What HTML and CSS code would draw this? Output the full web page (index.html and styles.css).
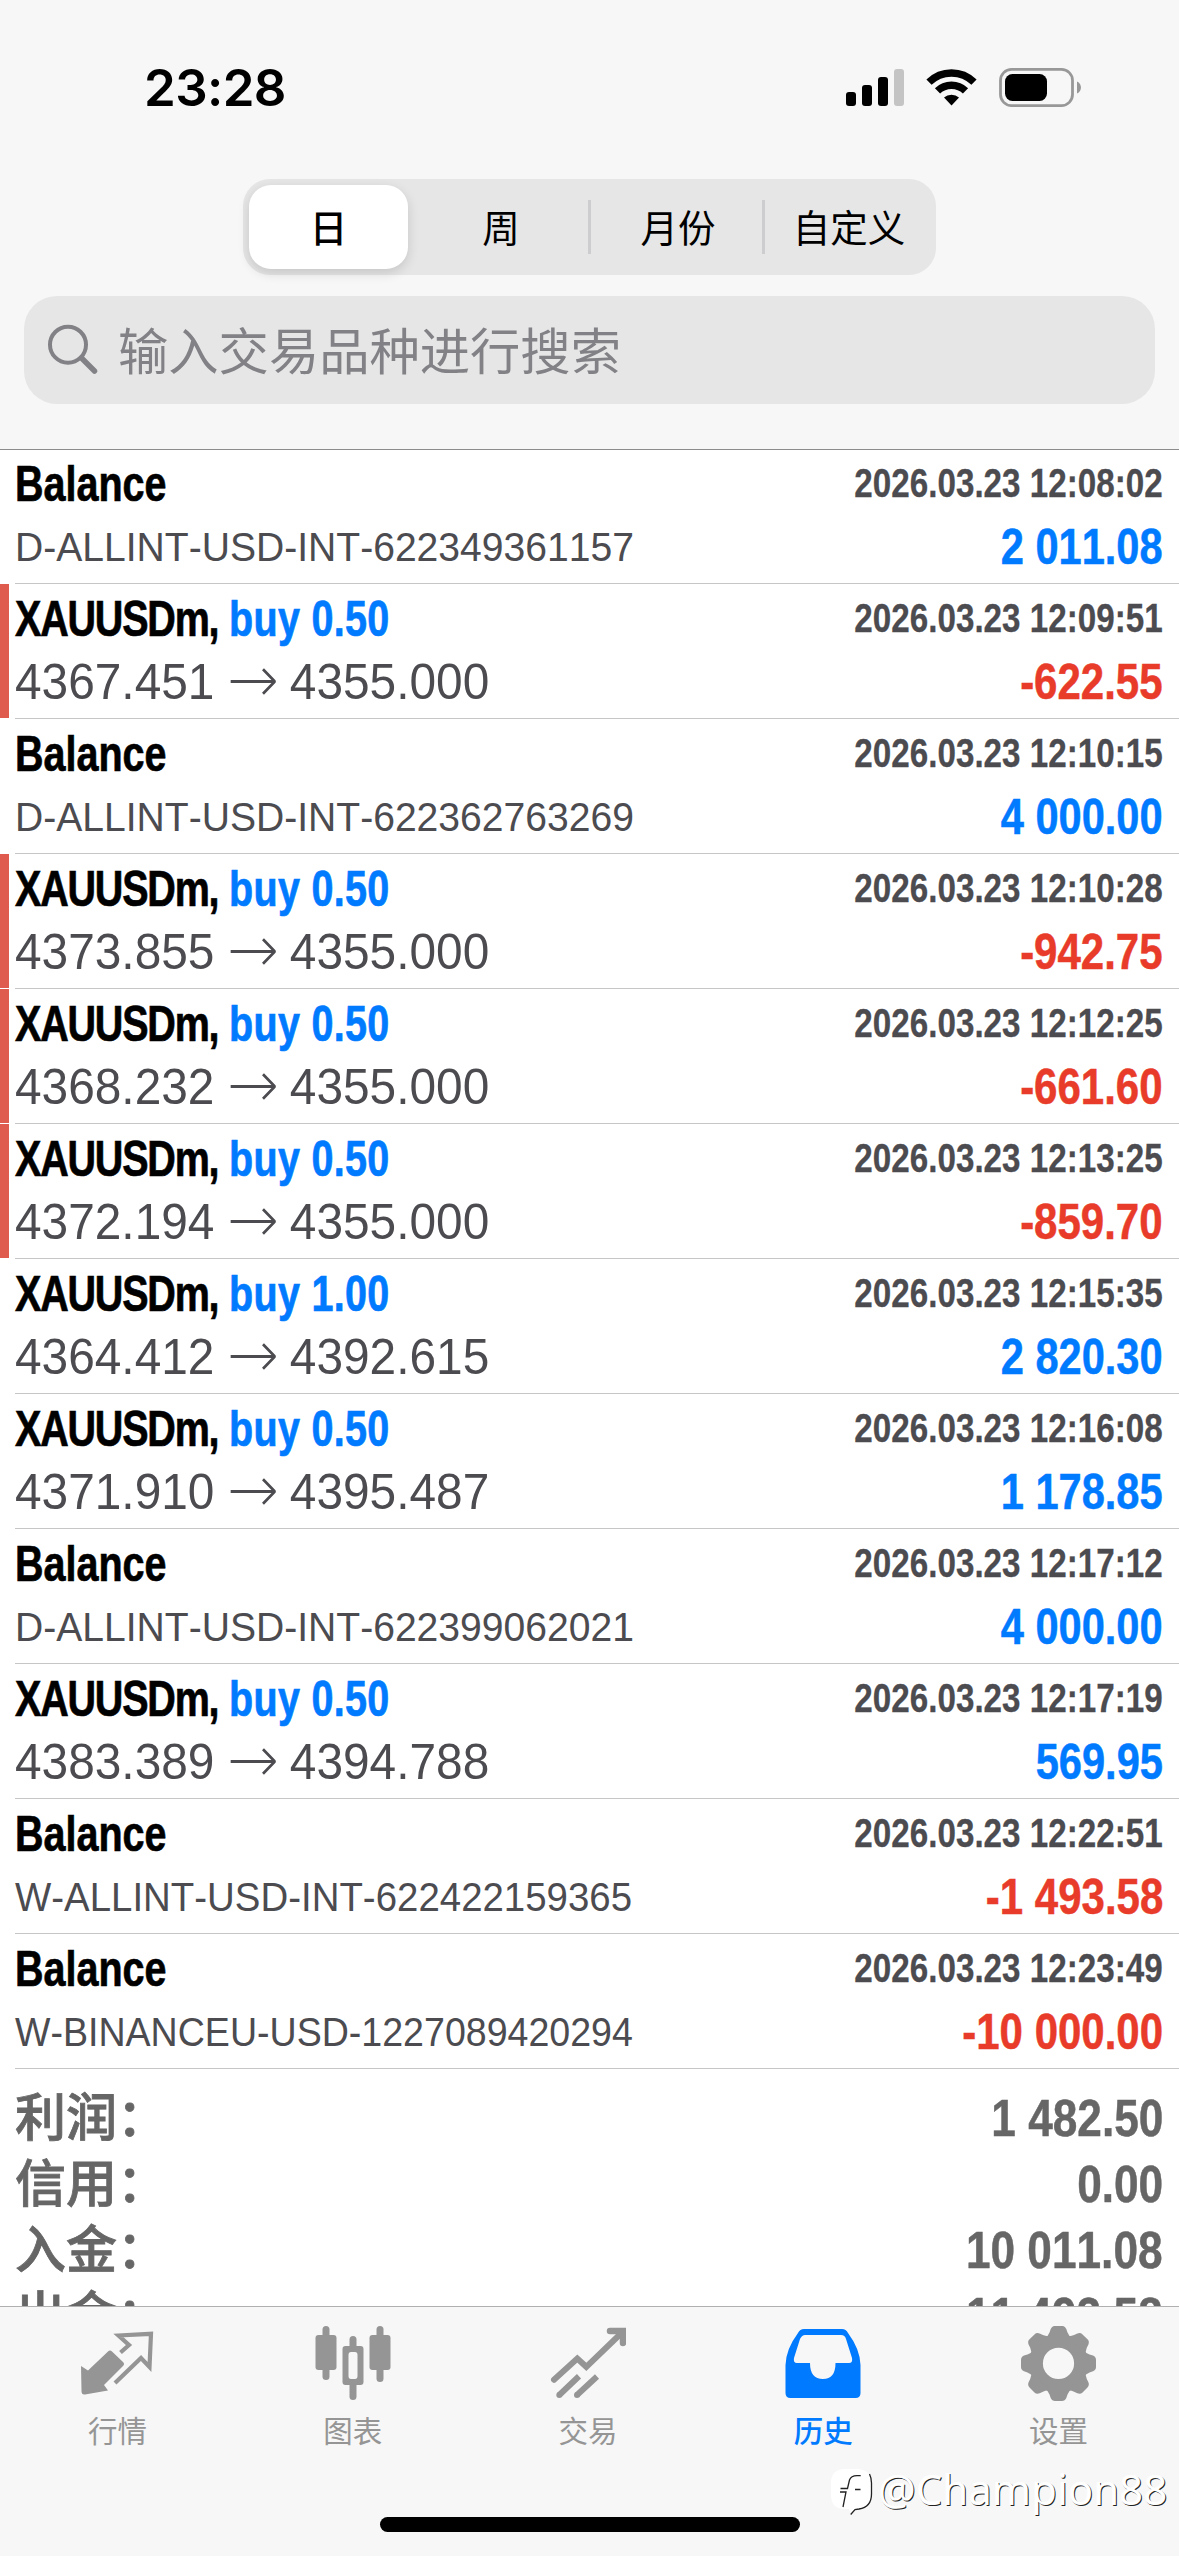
FILE: index.html
```html
<!DOCTYPE html>
<html lang="zh-CN">
<head>
<meta charset="utf-8">
<title>历史</title>
<link rel="stylesheet" href="styles.css">
</head>
<body>
<div class="screen">
  <header class="top">
    <div class="status">
      <span class="clock">23:28</span>
      <svg class="status-icons" width="240" height="40" viewBox="0 0 240 40">
        <g fill="#000"><rect x="0" y="23" width="10" height="14" rx="3"/><rect x="16" y="16" width="10" height="21" rx="3"/><rect x="32" y="8" width="10" height="29" rx="3"/></g>
        <rect x="48" y="0" width="10" height="37" rx="3" fill="#c4c4c4"/>
        <g fill="none" stroke="#000" stroke-width="7.4"><path d="M83 13.2A32 32 0 0 1 128 13.2"/><path d="M91.5 21.9A20 20 0 0 1 119.5 21.9"/></g>
        <path d="M98 28.6A11 11 0 0 1 113 28.6L105.500 36.500Z" fill="#000"/>
        <rect x="154.500" y="0.400" width="72" height="36.200" rx="11" fill="none" stroke="#989898" stroke-width="2.800"/>
        <rect x="159" y="5" width="42" height="27" rx="7.500"/>
        <path d="M231 12.500C236.300 14.500 236.300 22.500 231 24.500Z" fill="#989898"/>
      </svg>
    </div>
    <nav class="segments">
      <span class="seg on">日</span><span class="seg">周</span><span class="seg ruled">月份</span><span class="seg ruled">自定义</span>
    </nav>
    <div class="search">
      <svg width="52" height="52" viewBox="0 0 52 52" fill="none" stroke="#828286"><circle cx="22" cy="20.700" r="18" stroke-width="4"/><path d="M35.500 34L48.500 47" stroke-width="5.500" stroke-linecap="round"/></svg>
      <span>输入交易品种进行搜索</span>
    </div>
  </header>

  <main class="history">
    <article class="deal"><div class="line"><b class="name">Balance</b><time>2026.03.23 12:08:02</time></div><div class="line"><span class="ref">D-ALLINT-USD-INT-622349361157</span><b class="sum">2 011.08</b></div></article>
    <article class="deal stop"><div class="line"><b class="name pair">XAUUSDm, <i>buy 0.50</i></b><time>2026.03.23 12:09:51</time></div><div class="line"><span class="price">4367.451<svg class="arrow" viewBox="0 0 46 26"><path d="M0 13H44M33 1L45 13L33 25"/></svg>4355.000</span><b class="sum loss">-622.55</b></div></article>
    <article class="deal"><div class="line"><b class="name">Balance</b><time>2026.03.23 12:10:15</time></div><div class="line"><span class="ref">D-ALLINT-USD-INT-622362763269</span><b class="sum">4 000.00</b></div></article>
    <article class="deal stop"><div class="line"><b class="name pair">XAUUSDm, <i>buy 0.50</i></b><time>2026.03.23 12:10:28</time></div><div class="line"><span class="price">4373.855<svg class="arrow" viewBox="0 0 46 26"><path d="M0 13H44M33 1L45 13L33 25"/></svg>4355.000</span><b class="sum loss">-942.75</b></div></article>
    <article class="deal stop"><div class="line"><b class="name pair">XAUUSDm, <i>buy 0.50</i></b><time>2026.03.23 12:12:25</time></div><div class="line"><span class="price">4368.232<svg class="arrow" viewBox="0 0 46 26"><path d="M0 13H44M33 1L45 13L33 25"/></svg>4355.000</span><b class="sum loss">-661.60</b></div></article>
    <article class="deal stop"><div class="line"><b class="name pair">XAUUSDm, <i>buy 0.50</i></b><time>2026.03.23 12:13:25</time></div><div class="line"><span class="price">4372.194<svg class="arrow" viewBox="0 0 46 26"><path d="M0 13H44M33 1L45 13L33 25"/></svg>4355.000</span><b class="sum loss">-859.70</b></div></article>
    <article class="deal"><div class="line"><b class="name pair">XAUUSDm, <i>buy 1.00</i></b><time>2026.03.23 12:15:35</time></div><div class="line"><span class="price">4364.412<svg class="arrow" viewBox="0 0 46 26"><path d="M0 13H44M33 1L45 13L33 25"/></svg>4392.615</span><b class="sum">2 820.30</b></div></article>
    <article class="deal"><div class="line"><b class="name pair">XAUUSDm, <i>buy 0.50</i></b><time>2026.03.23 12:16:08</time></div><div class="line"><span class="price">4371.910<svg class="arrow" viewBox="0 0 46 26"><path d="M0 13H44M33 1L45 13L33 25"/></svg>4395.487</span><b class="sum">1 178.85</b></div></article>
    <article class="deal"><div class="line"><b class="name">Balance</b><time>2026.03.23 12:17:12</time></div><div class="line"><span class="ref">D-ALLINT-USD-INT-622399062021</span><b class="sum">4 000.00</b></div></article>
    <article class="deal"><div class="line"><b class="name pair">XAUUSDm, <i>buy 0.50</i></b><time>2026.03.23 12:17:19</time></div><div class="line"><span class="price">4383.389<svg class="arrow" viewBox="0 0 46 26"><path d="M0 13H44M33 1L45 13L33 25"/></svg>4394.788</span><b class="sum">569.95</b></div></article>
    <article class="deal"><div class="line"><b class="name">Balance</b><time>2026.03.23 12:22:51</time></div><div class="line"><span class="ref withdrawal">W-ALLINT-USD-INT-622422159365</span><b class="sum loss">-1 493.58</b></div></article>
    <article class="deal"><div class="line"><b class="name">Balance</b><time>2026.03.23 12:23:49</time></div><div class="line"><span class="ref external">W-BINANCEU-USD-1227089420294</span><b class="sum loss">-10 000.00</b></div></article>
    <section class="totals">
      <div class="total"><span>利润：</span><b>1 482.50</b></div>
      <div class="total"><span>信用：</span><b>0.00</b></div>
      <div class="total"><span>入金：</span><b>10 011.08</b></div>
      <div class="total"><span>出金：</span><b>11 493.58</b></div>
    </section>
  </main>

  <footer class="bottom">
    <nav class="tabs">
      <a class="tab"><svg width="76" height="80" viewBox="0 0 76 80"><path d="M1 40L8 44.500L28 25.500Q30 23.500 32 25.500L43 36Q45 38 43 40L24 59L28 64.500L5 68.500Q1.500 69 1.500 65Z" fill="#959595"/><path d="M40.500 26.500L49 19L38.500 9.500L71 7.800L69.500 41L61 32L35 57" fill="none" stroke="#959595" stroke-width="4.200"/></svg><span>行情</span></a>
      <a class="tab"><svg width="76" height="80" viewBox="0 0 76 80" fill="#959595"><rect x="7.500" y="0" width="7" height="54" rx="3.500"/><rect x="0.500" y="9" width="21" height="35" rx="3"/><rect x="34.500" y="10" width="7" height="15" rx="3.500"/><rect x="34.500" y="54" width="7" height="20" rx="3.500"/><path fill-rule="evenodd" d="M30.500 20H45.500Q48.500 20 48.500 23V56Q48.500 59 45.500 59H30.500Q27.500 59 27.500 56V23Q27.500 20 30.500 20ZM36 26Q33.500 26 33.500 29V50Q33.500 53 36 53H40Q42.500 53 42.500 50V29Q42.500 26 40 26Z"/><rect x="61.500" y="0" width="7" height="56" rx="3.500"/><rect x="54.500" y="9" width="21" height="35" rx="3"/></svg><span>图表</span></a>
      <a class="tab"><svg width="76" height="80" viewBox="0 0 76 80" fill="none" stroke="#959595" stroke-width="6"><path d="M4 53.700L27.300 32.500L36.300 40.800L72 6.500" stroke-linecap="round"/><path d="M60 5H73V17" stroke-width="6.500" stroke-linecap="round"/><path d="M29 50.300L9.300 69M47 50.500L27 69"/><g fill="#959595" stroke="none"><circle cx="9.300" cy="69" r="3"/><circle cx="27" cy="69" r="3"/></g></svg><span>交易</span></a>
      <a class="tab active"><svg width="76" height="80" viewBox="0 0 76 80"><path fill="#007aff" fill-rule="evenodd" d="M19 3H57Q61 3 63 7Q75 23 75.500 39V67Q75.500 72 70.500 72H5.500Q0.500 72 0.500 67V39Q1 23 13 7Q15 3 19 3ZM20 9Q17 9 15 13L9 32Q8 37 12 37H25Q25 53 38 53Q50.500 53 50.500 37H64Q68 37 67 32L61 13Q60 9 56 9Z"/></svg><span>历史</span></a>
      <a class="tab"><svg width="76" height="80" viewBox="0 0 76 80"><defs><path id="tooth" d="M-14 -25Q-10.500 -27 -9 -31L-7.800 -34.500Q-6.500 -37.500 -3.500 -37.500H3.500Q6.500 -37.500 7.800 -34.500L9 -31Q10.500 -27 14 -25Z"/></defs><g transform="translate(38.500 37.400)" fill="#959595"><circle r="22.300" fill="none" stroke="#959595" stroke-width="13.400"/><use href="#tooth"/><use href="#tooth" transform="rotate(45)"/><use href="#tooth" transform="rotate(90)"/><use href="#tooth" transform="rotate(135)"/><use href="#tooth" transform="rotate(180)"/><use href="#tooth" transform="rotate(225)"/><use href="#tooth" transform="rotate(270)"/><use href="#tooth" transform="rotate(315)"/></g></svg><span>设置</span></a>
    </nav>
    <div class="home"></div>
    <div class="watermark"><svg width="43" height="52" viewBox="0 0 43 52" fill="none"><path d="M14 4H26Q40 4 40 18V29Q40 43 27 43.500L20 49L18 44H14Q0 44 0 30V18Q0 4 14 4Z" fill="#fff"/><path d="M38.500 9Q40.500 13 40.500 18V29Q40.500 42 28 44L24 44.500L19.700 49.500M29.700 10.700H26Q20 10.700 18.500 15L16.500 23.500H9.500M9 27H15L12 42M24 24.500H29.500" stroke="#222" stroke-width="1.300"/></svg><span>@Champion88</span></div>
  </footer>
</div>
</body>
</html>
```
FILE: styles.css
```css
* { box-sizing: border-box; }
body { margin: 0; background: #fff; font-family: "Liberation Sans", "Noto Sans CJK SC", sans-serif; }
.screen { width: 1179px; height: 2556px; display: flex; flex-direction: column; overflow: hidden; position: relative; }

.top { flex: none; height: 450px; background: #f7f7f7; border-bottom: 1px solid #8c8c8e; display: flex; flex-direction: column; align-items: center; }
.status { flex: none; width: 100%; height: 179px; padding: 69px 93px 0 144px; display: flex; justify-content: space-between; align-items: flex-start; }
.status-icons { overflow: visible; }
.clock { font: 600 51px/38px Inter, sans-serif; letter-spacing: -0.6px; }
.segments { flex: none; width: 693px; height: 96px; padding: 6px; border-radius: 27px; background: #e6e6e7; display: grid; grid-template-columns: 159px 180px 174px 1fr; }
.seg { display: flex; align-items: center; justify-content: center; padding: 0 0 3px 6px; font: 400 37.5px/1 "Noto Sans CJK SC", sans-serif; }
.seg.on { padding-left: 0; font-weight: 500; background: #fff; border-radius: 22px; box-shadow: 0 4px 12px rgba(0, 0, 0, .14); }
.ruled { background: linear-gradient(#cdcdcf, #cdcdcf) left 15px / 3px 54px no-repeat; }
.search { flex: none; width: 1131px; height: 108px; margin-top: 21px; padding-left: 22px; border-radius: 33px; background: #e6e6e7; display: flex; align-items: center; gap: 20px; color: #828286; font: 400 50.3px/1 "Noto Sans CJK SC", sans-serif; }
.search span { padding-bottom: 3px; }

.history { flex: none; height: 1856px; overflow: hidden; font-kerning: none; }
.deal { height: 135px; padding: 6px 16px 0 15px; background: linear-gradient(#c6c6c8, #c6c6c8) 15px 134px / 1164px 1px no-repeat; }
.deal:first-child { margin-top: -1px; }
.stop { background: linear-gradient(#de5b4e, #de5b4e) 0 0 / 9px 134px no-repeat, linear-gradient(#c6c6c8, #c6c6c8) 15px 134px / 1164px 1px no-repeat; }
.line { height: 63px; display: flex; justify-content: space-between; align-items: baseline; white-space: nowrap; line-height: 58px; }
.name, .ref, .price { transform-origin: left; }
.name { font-size: 50px; transform: scaleX(.79); -webkit-text-stroke: .7px; }
.pair { letter-spacing: -1.5px; }
.name i { font-style: normal; letter-spacing: .4px; margin-left: 1px; color: #007aff; }
time { font-size: 41px; font-weight: 700; color: #4b4b50; transform: translateY(-4px) scaleX(.81); transform-origin: right; -webkit-text-stroke: .3px; }
.ref { font-size: 41px; color: #4b4b50; transform: translateY(-3px) scaleX(.953); }
.withdrawal { transform: translateY(-3px) scaleX(.937); }
.external { transform: translateY(-3px) scaleX(.916); }
.price { font-size: 49.5px; color: #4b4b50; transform: scaleX(.966); }
.arrow { width: 47px; height: 27px; margin: 0 14px 0 17px; vertical-align: 4px; fill: none; stroke: #4b4b50; stroke-width: 2.8; }
.sum { font-size: 50px; color: #007aff; transform: scaleX(.832); transform-origin: right; -webkit-text-stroke: .5px; }
.loss { color: #e83b2a; transform: scaleX(.84); }
.totals { padding: 12px 16px 0 15px; color: #666; }
.total { height: 66px; display: flex; justify-content: space-between; align-items: baseline; line-height: 66px; }
.total span { font: 500 51px/66px "Noto Sans CJK SC", sans-serif; -webkit-text-stroke: .8px; }
.total b { font-size: 52.5px; transform: scaleX(.842); transform-origin: right; -webkit-text-stroke: .5px; }

.bottom { flex: 1; background: #f7f7f7; border-top: 1px solid #b0b0b2; position: relative; }
.tabs { display: grid; grid-template-columns: repeat(5, 1fr); padding: 19px 3px 0 0; }
.tab { display: flex; flex-direction: column; align-items: center; color: #959595; font: 400 29.5px/40px "Noto Sans CJK SC", sans-serif; }
.tab span { margin-top: 3px; }
.active { color: #007aff; font-weight: 500; }
.home { position: absolute; left: 380px; top: 210px; width: 420px; height: 15px; border-radius: 8px; background: #000; }
.watermark { position: absolute; left: 831px; top: 158px; display: flex; gap: 4px; color: #fff; font: 400 42px/48px "Noto Sans", sans-serif; text-shadow: 1px 1px 0 #222; }
```
